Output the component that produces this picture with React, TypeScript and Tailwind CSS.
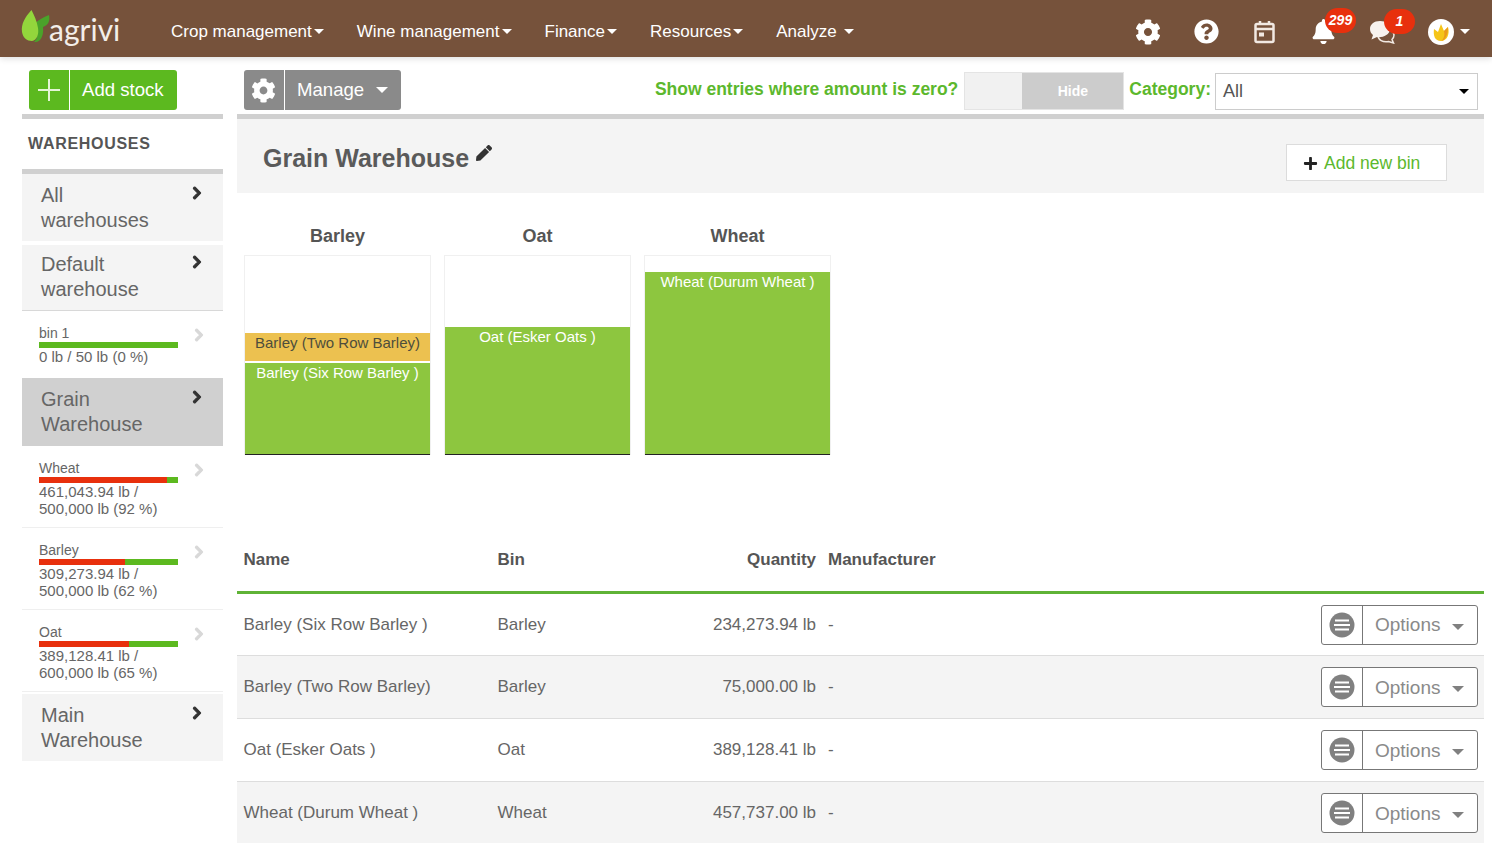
import React from "react";
import { FaBell, FaChevronRight, FaCog, FaPen, FaPlus, FaQuestionCircle } from "react-icons/fa";

const navItems = [
  { label: "Crop management", gap: "mr-[33px]" },
  { label: "Wine management", gap: "mr-[33px]" },
  { label: "Finance", gap: "mr-[33px]" },
  { label: "Resources", gap: "mr-[33px]" },
  { label: "Analyze", gap: "" },
];

type Bin = { name: string; used: number; lines: string[] };

const bins: Bin[] = [
  { name: "Wheat", used: 92, lines: ["461,043.94 lb /", "500,000 lb (92 %)"] },
  { name: "Barley", used: 62, lines: ["309,273.94 lb /", "500,000 lb (62 %)"] },
  { name: "Oat", used: 65, lines: ["389,128.41 lb /", "600,000 lb (65 %)"] },
];

const rows = [
  { name: "Barley (Six Row Barley )", bin: "Barley", qty: "234,273.94 lb", cls: "h-[62px]" },
  { name: "Barley (Two Row Barley)", bin: "Barley", qty: "75,000.00 lb", cls: "h-[63px] bg-[#f4f4f4]" },
  { name: "Oat (Esker Oats )", bin: "Oat", qty: "389,128.41 lb", cls: "h-[63px]" },
  { name: "Wheat (Durum Wheat )", bin: "Wheat", qty: "457,737.00 lb", cls: "h-[63px] bg-[#f4f4f4]" },
];

function Caret({ className }: { className: string }) {
  return <span className={"inline-block h-0 w-0 border-x-[5px] border-t-[5px] border-x-transparent " + className} />;
}

function Logo() {
  return (
    <div className="flex items-end">
      <svg width="30" height="36" viewBox="0 0 30 36" className="-mr-[2px] mb-[3px]">
        <path d="M22 17 C28 15 29 10 28 5 C22 7 18 10 14 13 C18 20 17 29 13 32 C20 33 23 25 22 17Z" fill="#4aa32a" />
        <path d="M10.500 0 C4 7 0 14 1 22 C2 28 6 31 11 31 C16 30 18 24 17 18 C16 11 13 5 10.500 0Z" fill="#93d63c" />
      </svg>
      <span className="font-['Lato',sans-serif] text-[30px] leading-[40px] font-normal text-[#f3eee9]">agrivi</span>
    </div>
  );
}

function Badge({ text, className }: { text: string; className: string }) {
  return (
    <span className={"absolute flex h-[25px] w-[31px] items-center justify-center rounded-full bg-[#e8300d] text-[14px] font-bold italic text-white " + className}>
      {text}
    </span>
  );
}

function ChatIcon() {
  return (
    <svg width="26" height="24" viewBox="0 0 26 24">
      <path d="M14 8C20 8 25 11 25 15 25 17 24 18.500 23 19.500L24.500 23 19.500 21.500C14 22.500 9 20 9 15.500 9 11 11 8 14 8Z" fill="none" stroke="#f2e9e2" strokeWidth="1.500" />
      <path d="M11 1C5 1 1 4.500 1 9C1 11.500 2.200 13.500 4 15L2.500 19.500 8 17C13 18 21 15 21 9C21 4.500 17 1 11 1Z" fill="#f7f2ee" />
    </svg>
  );
}

function TopBar() {
  return (
    <header className="flex h-[57px] items-center bg-[#76523b] shadow-[0_2px_6px_rgba(0,0,0,0.12)]">
      <div className="ml-[21px] w-[150px]">
        <Logo />
      </div>
      <nav className="mt-[6px] flex items-center text-[17px] text-white">
        {navItems.map((item) => (
          <div key={item.label} className={"flex items-center " + item.gap}>
            {item.label}
            <Caret className={(item.label === "Analyze" ? "ml-[7px] " : "ml-[2px] ") + "border-t-white"} />
          </div>
        ))}
      </nav>
      <div className="ml-auto mr-[22px] mt-[6px] flex items-center text-white">
        <div className="flex w-[59px] justify-center"><FaCog size={26} /></div>
        <div className="flex w-[58px] justify-center"><FaQuestionCircle size={25} /></div>
        <div className="flex w-[59px] justify-center">
          <svg width="21" height="24" viewBox="0 0 21 24" fill="none" stroke="#f2e9e2" strokeWidth="2.500">
            <rect x="1.500" y="4" width="18" height="18" rx="1.500" />
            <path d="M1.500 9h18M6 1v4M15 1v4" />
            <rect x="5" y="12.500" width="5" height="4" fill="#f2e9e2" stroke="none" />
          </svg>
        </div>
        <div className="relative flex w-[59px] justify-center">
          <FaBell size={25} />
          <Badge text="299" className="left-[31px] -top-[11px]" />
        </div>
        <div className="relative flex w-[58px] justify-center">
          <ChatIcon />
          <Badge text="1" className="left-[31px] -top-[11px]" />
        </div>
        <div className="flex w-[59px] items-center justify-end">
          <div className="flex h-[26px] w-[26px] items-center justify-center rounded-full bg-white">
            <svg width="18" height="20" viewBox="0 0 18 20">
              <path d="M9 19C3 19 1 14 2 7L6 10 9 2 12 9 16 5C18 12 15 19 9 19Z" fill="#f5c518" />
              <path d="M9 19C14 18 16 12 16 5L12 9C13 13 12 17 9 19Z" fill="#ea9a1c" />
            </svg>
          </div>
          <Caret className="ml-[6px] border-t-white" />
        </div>
      </div>
    </header>
  );
}

function Chevron({ className }: { className: string }) {
  return <FaChevronRight size={14} stroke="currentColor" strokeWidth={40} className={"mt-[3px] shrink-0 " + className} />;
}

function GroupRow({ lines, className }: { lines: string[]; className: string }) {
  return (
    <div className={"flex items-start justify-between pl-[19px] pr-[19px] " + className}>
      <div className="text-[20px] leading-[25px] text-[#666666]">
        {lines.map((l) => <div key={l}>{l}</div>)}
      </div>
      <Chevron className="text-[#333333]" />
    </div>
  );
}

function BinRow({ name, used, lines, className }: Bin & { className: string }) {
  return (
    <div className={"flex justify-between pl-[17px] pr-[17px] pt-[14px] " + className}>
      <div className="w-[139px] text-[15px] leading-[17px] text-[#666666]">
        <div className="text-[14px]">{name}</div>
        <div className="flex h-[6px] bg-[#5cb91f]">
          <div className="bg-[#e8300d]" style={{ width: used + "%" }} />
        </div>
        {lines.map((l) => <div key={l}>{l}</div>)}
      </div>
      <Chevron className="text-[#d8d8d8]" />
    </div>
  );
}

function Sidebar() {
  return (
    <aside className="w-[201px] shrink-0">
      <div className="h-[57px] pl-[7px] pt-[13px]">
        <div className="flex h-[40px] w-[148px] items-center rounded-[3px] bg-[#5cb91f] text-white">
          <div className="flex h-full w-[40px] items-center justify-center">
            <svg width="22" height="22" viewBox="0 0 22 22" stroke="#e4f5d6" strokeWidth="2"><path d="M11 0v22M0 11h22" /></svg>
          </div>
          <div className="h-full w-px bg-white" />
          <span className="pl-[12px] text-[18.600px]">Add stock</span>
        </div>
      </div>
      <div className="h-[5px] bg-[#d0d0d0]" />
      <div className="flex h-[50px] items-center pl-[6px] text-[16px] font-bold tracking-[0.7px] text-[#555555]">WAREHOUSES</div>
      <div className="h-[5px] bg-[#d0d0d0]" />
      <GroupRow lines={["All", "warehouses"]} className="h-[67px] bg-[#f4f4f4] pt-[9px]" />
      <div className="h-[4px]" />
      <GroupRow lines={["Default", "warehouse"]} className="h-[65px] bg-[#f4f4f4] pt-[7px]" />
      <div className="h-px bg-[#d8d8d8]" />
      <BinRow name="bin 1" used={0} lines={["0 lb / 50 lb (0 %)"]} className="h-[67px]" />
      <GroupRow lines={["Grain", "Warehouse"]} className="h-[68px] bg-[#d0d0d0] pt-[9px]" />
      {bins.map((b) => <BinRow key={b.name} {...b} className="h-[82px] border-b border-[#efefef]" />)}
      <div className="h-[2px]" />
      <GroupRow lines={["Main", "Warehouse"]} className="h-[67px] bg-[#f4f4f4] pt-[9px]" />
    </aside>
  );
}

function Toolbar() {
  return (
    <div className="flex h-[57px] items-start pl-[7px] pr-[6px] pt-[13px]">
      <div className="flex h-[40px] w-[157px] items-center rounded-[3px] bg-[#8a8a8a] text-white">
        <div className="flex h-full w-[40px] items-center justify-center pr-[2px]"><FaCog size={25} /></div>
        <div className="h-full w-px bg-white" />
        <span className="pl-[12px] text-[18.600px]">Manage</span>
        <Caret className="ml-[12px] border-x-[6px] border-t-[6px] border-t-white" />
      </div>
      <div className="ml-auto mt-[7px] text-[17.500px] font-bold leading-[24px] text-[#5cb82d]">Show entries where amount is zero?</div>
      <div className="ml-[6px] mt-[2px] flex h-[38px] w-[160px] border border-[#e4e4e4]">
        <div className="w-[57px] bg-[#f1f1f1]" />
        <div className="flex flex-1 items-center justify-center bg-[#cccccc] text-[14px] font-bold text-white">Hide</div>
      </div>
      <div className="ml-[5px] mt-[7px] text-[17.500px] font-bold leading-[24px] text-[#5cb82d]">Category:</div>
      <div className="ml-[4px] mt-[3px] flex h-[37px] w-[263px] items-center justify-between border border-[#cccccc] pl-[7px] pr-[8px] text-[18px] text-[#555555]">
        All
        <Caret className="border-t-black" />
      </div>
    </div>
  );
}

function Chart() {
  return (
    <div className="flex h-[318px] gap-[13px] pl-[7px] pt-[31px]">
      <ChartCol title="Barley">
        <div className="h-[28px] bg-[#ecc150] text-center text-[15px] leading-[20px] text-[#4e4e3c]">Barley (Two Row Barley)</div>
        <div className="h-[2px]" />
        <div className="h-[91px] bg-[#8dc63f] text-center text-[15px] leading-[20px] text-white">Barley (Six Row Barley )</div>
      </ChartCol>
      <ChartCol title="Oat">
        <div className="h-[127px] bg-[#8dc63f] text-center text-[15px] leading-[20px] text-white">Oat (Esker Oats )</div>
      </ChartCol>
      <ChartCol title="Wheat">
        <div className="h-[182px] bg-[#8dc63f] text-center text-[15px] leading-[20px] text-white">Wheat (Durum Wheat )</div>
      </ChartCol>
    </div>
  );
}

function ChartCol({ title, children }: { title: string; children: React.ReactNode }) {
  return (
    <div className="w-[187px]">
      <div className="h-[31px] text-center text-[18px] font-bold leading-[24px] text-[#555555]">{title}</div>
      <div className="flex h-[200px] flex-col justify-end border border-b-0 border-[#f0f0f0]">
        {children}
        <div className="h-px shrink-0 bg-[#222222]" />
      </div>
    </div>
  );
}

function OptionsButton() {
  return (
    <div className="flex h-[40px] w-[157px] items-center rounded-[3px] border border-[#777777] bg-white text-[#8a8a8a]">
      <div className="flex h-full w-[41px] items-center justify-center border-r border-[#777777]">
        <svg width="26" height="26" viewBox="0 0 26 26">
          <circle cx="13" cy="13" r="12.500" fill="#808080" />
          <path d="M6 8.500h14M5 13h16M6 17.500h14" stroke="#ffffff" strokeWidth="2" />
        </svg>
      </div>
      <span className="pl-[12px] pt-[2px] text-[19px]">Options</span>
      <Caret className="ml-[12px] mt-[4px] border-x-[6px] border-t-[6px] border-t-[#808080]" />
    </div>
  );
}

function StockTable() {
  return (
    <div>
      <div className="grid h-[80px] grid-cols-[254px_150px_181px_1fr] items-end pb-[19px] text-[17px] font-bold leading-[24px] text-[#555555]">
        <div className="pl-[6.500px]">Name</div>
        <div className="pl-[6.500px]">Bin</div>
        <div className="pr-[6px] text-right">Quantity</div>
        <div className="pl-[6px]">Manufacturer</div>
      </div>
      <div className="h-[3px] bg-[#5fb336]" />
      {rows.map((r) => (
        <div
          key={r.name}
          className={"grid grid-cols-[254px_150px_181px_1fr_auto] items-center border-b border-[#dddddd] pr-[6px] text-[17px] text-[#666666] " + r.cls}
        >
          <div className="pl-[6.500px]">{r.name}</div>
          <div className="pl-[6.500px]">{r.bin}</div>
          <div className="pr-[6px] text-right">{r.qty}</div>
          <div className="pl-[6px]">-</div>
          <OptionsButton />
        </div>
      ))}
    </div>
  );
}

export default function App() {
  return (
    <div className="h-[843px] overflow-hidden bg-white font-['Liberation_Sans',Arial,sans-serif]">
      <TopBar />
      <div className="ml-[22px] flex w-[1462px] gap-[14px]">
        <Sidebar />
        <main className="min-w-0 flex-1">
          <Toolbar />
          <div className="h-[5px] bg-[#d0d0d0]" />
          <div className="flex h-[74px] bg-[#f4f4f4] pl-[26px] pr-[37px]">
            <h1 className="mt-[24px] text-[25px] font-bold leading-[30px] text-[#5a5a5a]">Grain Warehouse</h1>
            <FaPen size={16} className="ml-[7px] mt-[26px] text-[#333333]" />
            <div className="ml-auto mt-[25px] flex h-[37px] w-[161px] items-center border border-[#dcdcdc] bg-white pl-[16px] pt-px text-[17.500px] text-[#5cb82d]">
              <FaPlus size={15} className="mr-[6px] text-[#222222]" />
              Add new bin
            </div>
          </div>
          <Chart />
          <StockTable />
        </main>
      </div>
    </div>
  );
}
